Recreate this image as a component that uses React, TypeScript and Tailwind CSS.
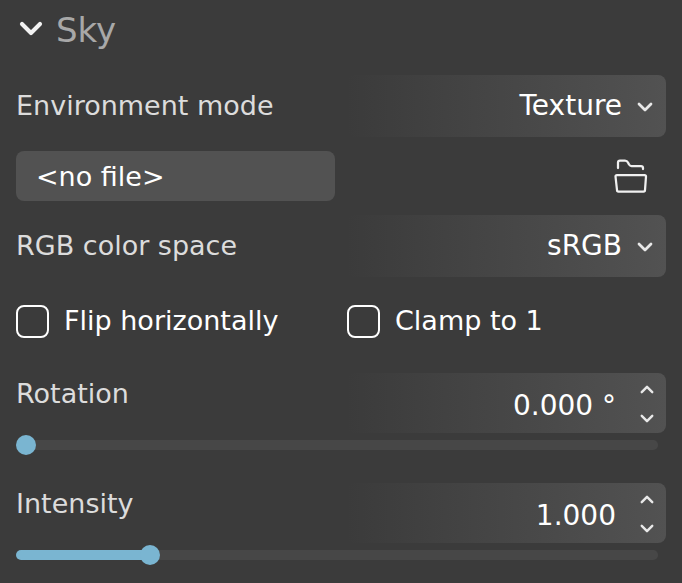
import { useState } from 'react'

const selectClass =
  'h-[62px] w-full appearance-none rounded-lg bg-linear-to-r from-[#3b3b3b] to-[#525252] pr-11 text-right text-[28px] [text-align-last:right] text-white outline-none'

function Chevron({ up = false, className }: { up?: boolean; className: string }) {
  return (
    <svg viewBox="0 0 16 10" fill="none" stroke="currentColor" strokeWidth="2.75" strokeLinecap="round" strokeLinejoin="round" className={className}>
      <path d={up ? 'M2 8l6-6 6 6' : 'M2 2l6 6 6-6'} />
    </svg>
  )
}

function SelectRow({ id, label, options }: { id: string; label: string; options: string[] }) {
  const [value, setValue] = useState(options[0])

  return (
    <div className="grid grid-cols-2 items-center gap-3">
      <label htmlFor={id} className="whitespace-nowrap">{label}</label>
      <div className="relative">
        <select id={id} value={value} onChange={e => setValue(e.target.value)} className={selectClass}>
          {options.map(o => <option key={o} className="bg-[#3b3b3b]">{o}</option>)}
        </select>
        <Chevron className="pointer-events-none absolute right-[13px] top-[27px] h-[10px] w-4 text-[#e8e8e8]" />
      </div>
    </div>
  )
}

function CheckOption({ label }: { label: string }) {
  const [checked, setChecked] = useState(false)

  return (
    <label className="flex h-[33px] items-center gap-[15px] whitespace-nowrap text-white">
      <input
        type="checkbox"
        checked={checked}
        onChange={e => setChecked(e.target.checked)}
        className="size-[33px] shrink-0 appearance-none rounded-lg border-2 border-white checked:bg-[#7ab5d1]"
      />
      {label}
    </label>
  )
}

type SliderRowProps = { id: string; label: string; initial: number; max: number; step: number; unit?: string }

function SliderRow({ id, label, initial, max, step, unit = '' }: SliderRowProps) {
  const [value, setValue] = useState(initial)
  const nudge = (delta: number) => setValue(v => Math.min(max, Math.max(0, v + delta)))
  const percent = (value / max) * 100

  return (
    <div>
      <div className="grid grid-cols-2 gap-3">
        <label htmlFor={id} className="leading-[42px]">{label}</label>
        <div className="flex h-[60px] items-center rounded-lg bg-linear-to-r from-[#3b3b3b] to-[#525252]">
          <input
            id={id}
            type="text"
            value={value.toFixed(3) + unit}
            onChange={e => {
              const next = parseFloat(e.target.value)
              if (!isNaN(next)) setValue(Math.min(max, Math.max(0, next)))
            }}
            className="h-full w-full min-w-0 bg-transparent pt-1 text-right text-[28px] text-white outline-none"
          />
          <div className="ml-3 flex h-full shrink-0 flex-col pt-[2px] text-[#e8e8e8]">
            <button type="button" aria-label={`Increase ${label}`} onClick={() => nudge(step)} className="flex flex-1 items-center justify-center px-3">
              <Chevron up className="h-[9px] w-[14px]" />
            </button>
            <button type="button" aria-label={`Decrease ${label}`} onClick={() => nudge(-step)} className="flex flex-1 items-center justify-center px-3">
              <Chevron className="h-[9px] w-[14px]" />
            </button>
          </div>
        </div>
      </div>
      <div className="mt-[2px] flex h-5 items-center pr-2">
        <input
          type="range"
          aria-label={label}
          min={0}
          max={max}
          step={0.001}
          value={value}
          onChange={e => setValue(Number(e.target.value))}
          style={{ backgroundImage: `linear-gradient(to right, #7ab5d1 ${percent}%, #474747 ${percent}%)` }}
          className="h-[10px] w-full appearance-none rounded-full outline-none [&::-webkit-slider-thumb]:size-5 [&::-webkit-slider-thumb]:appearance-none [&::-webkit-slider-thumb]:rounded-full [&::-webkit-slider-thumb]:bg-[#7ab5d1]"
        />
      </div>
    </div>
  )
}

export default function App() {
  const [open, setOpen] = useState(true)
  const [file, setFile] = useState('<no file>')

  return (
    <main className="min-h-screen bg-[#3b3b3b] px-4 pb-4 font-['DejaVu_Sans',Verdana,sans-serif] text-[27px] text-[#dcdcdc]">
      <h2 className="mb-[15px] text-[34px] text-[#a8a8a8]">
        <button type="button" aria-expanded={open} onClick={() => setOpen(!open)} className="flex h-[60px] items-center gap-[13px] pl-[3px]">
          <Chevron up={!open} className="mb-1 h-[15px] w-6 text-[#f2f2f2]" />
          Sky
        </button>
      </h2>

      {open && (
        <>
          <div className="flex flex-col gap-[14px]">
            <SelectRow id="environment-mode" label="Environment mode" options={['Texture', 'Color']} />

            <div className="grid grid-cols-2 gap-3">
              <input
                type="text"
                aria-label="Texture file"
                value={file}
                onChange={e => setFile(e.target.value)}
                className="h-[50px] w-full rounded-lg bg-[#525252] px-5 text-white outline-none"
              />
              <button type="button" aria-label="Browse" className="justify-self-end px-[17px] text-[#f0f0f0]">
                <svg viewBox="0 0 36 36" fill="none" stroke="currentColor" strokeWidth="2.25" strokeLinecap="round" strokeLinejoin="round" className="size-9">
                  <path d="M5 10V4.500Q5 2.500 7 2.500H12Q14 2.500 15 4.500L16 6.500Q17 8 18.500 8H28Q30 8 30 10V11" />
                  <path d="M4 17H31.500Q33 17 33 18.500L32 32Q32 33.500 30.500 33.500H5.500Q4 33.500 4 32L2.500 18.500Q2.500 17 4 17Z" />
                </svg>
              </button>
            </div>

            <SelectRow id="color-space" label="RGB color space" options={['sRGB', 'Linear']} />
          </div>

          <div className="mb-[35px] mt-7 grid grid-cols-2 gap-3">
            <CheckOption label="Flip horizontally" />
            <CheckOption label="Clamp to 1" />
          </div>

          <div className="flex flex-col gap-7">
            <SliderRow id="rotation" label="Rotation" initial={0} max={360} step={1} unit=" °" />
            <SliderRow id="intensity" label="Intensity" initial={1} max={5} step={0.1} />
          </div>
        </>
      )}
    </main>
  )
}
